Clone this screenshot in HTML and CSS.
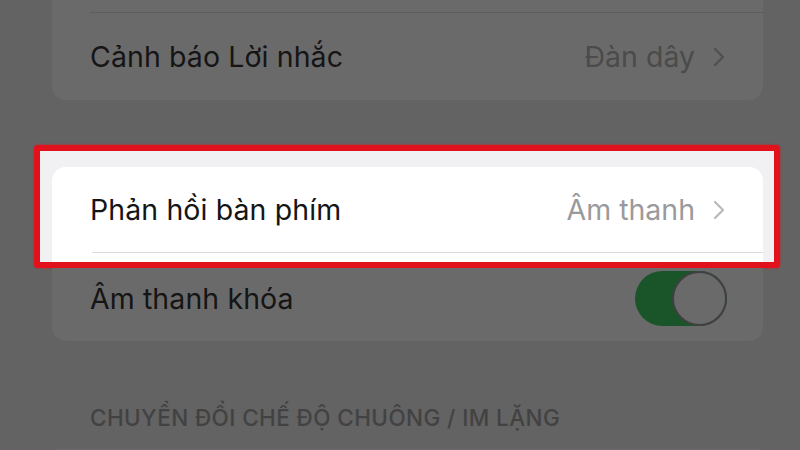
FILE: index.html
```html
<!DOCTYPE html>
<html lang="vi">
<head>
<meta charset="utf-8">
<link rel="stylesheet" href="styles.css">
</head>
<body>
<div class="screen">
  <div class="card card-top dim">
    <div class="sep dim-sep"></div>
    <div class="row">
      <span class="label">Cảnh báo Lời nhắc</span>
      <span class="value">Đàn dây
        <svg class="chev" viewBox="0 0 12 20" width="12" height="20"><polyline points="2,2 10,10 2,18" fill="none" stroke="currentColor" stroke-width="2.2" stroke-linecap="round" stroke-linejoin="round"/></svg>
      </span>
    </div>
  </div>

  <div class="highlight">
    <div class="card card-white">
      <div class="row row-white">
        <span class="label">Phản hồi bàn phím</span>
        <span class="value value-white">Âm thanh
          <svg class="chev" viewBox="0 0 12 20" width="12" height="20"><polyline points="2,2 10,10 2,18" fill="none" stroke="currentColor" stroke-width="2.2" stroke-linecap="round" stroke-linejoin="round"/></svg>
        </span>
      </div>
      <div class="sep white-sep"></div>
    </div>
  </div>

  <div class="card card-mid dim">
    <div class="row row-mid">
      <span class="label">Âm thanh khóa</span>
      <span class="toggle"><span class="knob"></span></span>
    </div>
  </div>

  <div class="section-head">CHUYỂN ĐỔI CHẾ ĐỘ CHUÔNG / IM LẶNG</div>

  <div class="card card-bottom dim"></div>
</div>
</body>
</html>
```

FILE: styles.css
```css
* { box-sizing: border-box; }
html, body {
  margin: 0;
  padding: 0;
  width: 800px;
  height: 450px;
  overflow: hidden;
  background: #636363;
  font-family: "Inter", "Noto Sans", sans-serif;
}
.screen {
  display: flex;
  flex-direction: column;
  width: 800px;
  height: 450px;
  overflow: hidden;
}
.screen > * { flex-shrink: 0; }
.card {
  margin-left: 52px;
  width: 711px;
}
.dim { background: #6a6a6a; }
.card-top {
  height: 100px;
  padding-top: 12px;
  border-radius: 0 0 14px 14px;
  display: flex;
  flex-direction: column;
}
.sep {
  height: 1px;
  flex-shrink: 0;
  margin-left: 38px;
}
.dim-sep { background: #5d5d5d; }
.white-sep { background: #dcdcde; margin-left: 40px; }
.row {
  display: flex;
  align-items: center;
  justify-content: space-between;
  padding: 0 38px 0 38px;
  flex: 1;
}
.label {
  font-size: 28.5px;
  color: #151515;
  letter-spacing: 0.1px;
}
.value {
  display: flex;
  align-items: center;
  gap: 18px;
  font-size: 28.5px;
  color: #4b4b4b;
}
.card-top .chev { color: #4f4f4f; }
.chev { width: 12px; height: 20px; }

.highlight {
  margin-top: 45px;
  margin-left: 34px;
  width: 746px;
  height: 123px;
  border: 6px solid #e2121c;
  border-radius: 4px;
  background: #f1f1f3;
  padding: 16px 11px 0 12px;
  box-shadow: 0 0 2px #e2121c;
}
.card-white {
  margin-left: 0;
  width: 100%;
  height: 95px;
  background: #ffffff;
  border-radius: 14px 14px 0 0;
  display: flex;
  flex-direction: column;
}
.row-white { height: 85px; flex: none; }
.value-white { color: #9a9a9c; }
.value-white .chev { color: #b9b9bd; }

.card-mid {
  height: 73px;
  border-radius: 0 0 14px 14px;
  display: flex;
}
.row-mid {
  padding-right: 36px;
  padding-bottom: 12px;
}
.toggle {
  width: 92px;
  height: 55px;
  border-radius: 28px;
  background: #1a5529;
  position: relative;
}
.knob {
  position: absolute;
  right: 0;
  top: 0;
  width: 55px;
  height: 55px;
  border-radius: 50%;
  background: #6a6a6a;
  border: 2px solid #404040;
}
.section-head {
  margin-top: 64px;
  margin-left: 90px;
  font-size: 22.5px;
  font-weight: 500;
  color: #424242;
  letter-spacing: 0.4px;
  line-height: 26px;
}
.card-bottom {
  margin-top: 18px;
  height: 5px;
  border-radius: 14px 14px 0 0;
}
```
